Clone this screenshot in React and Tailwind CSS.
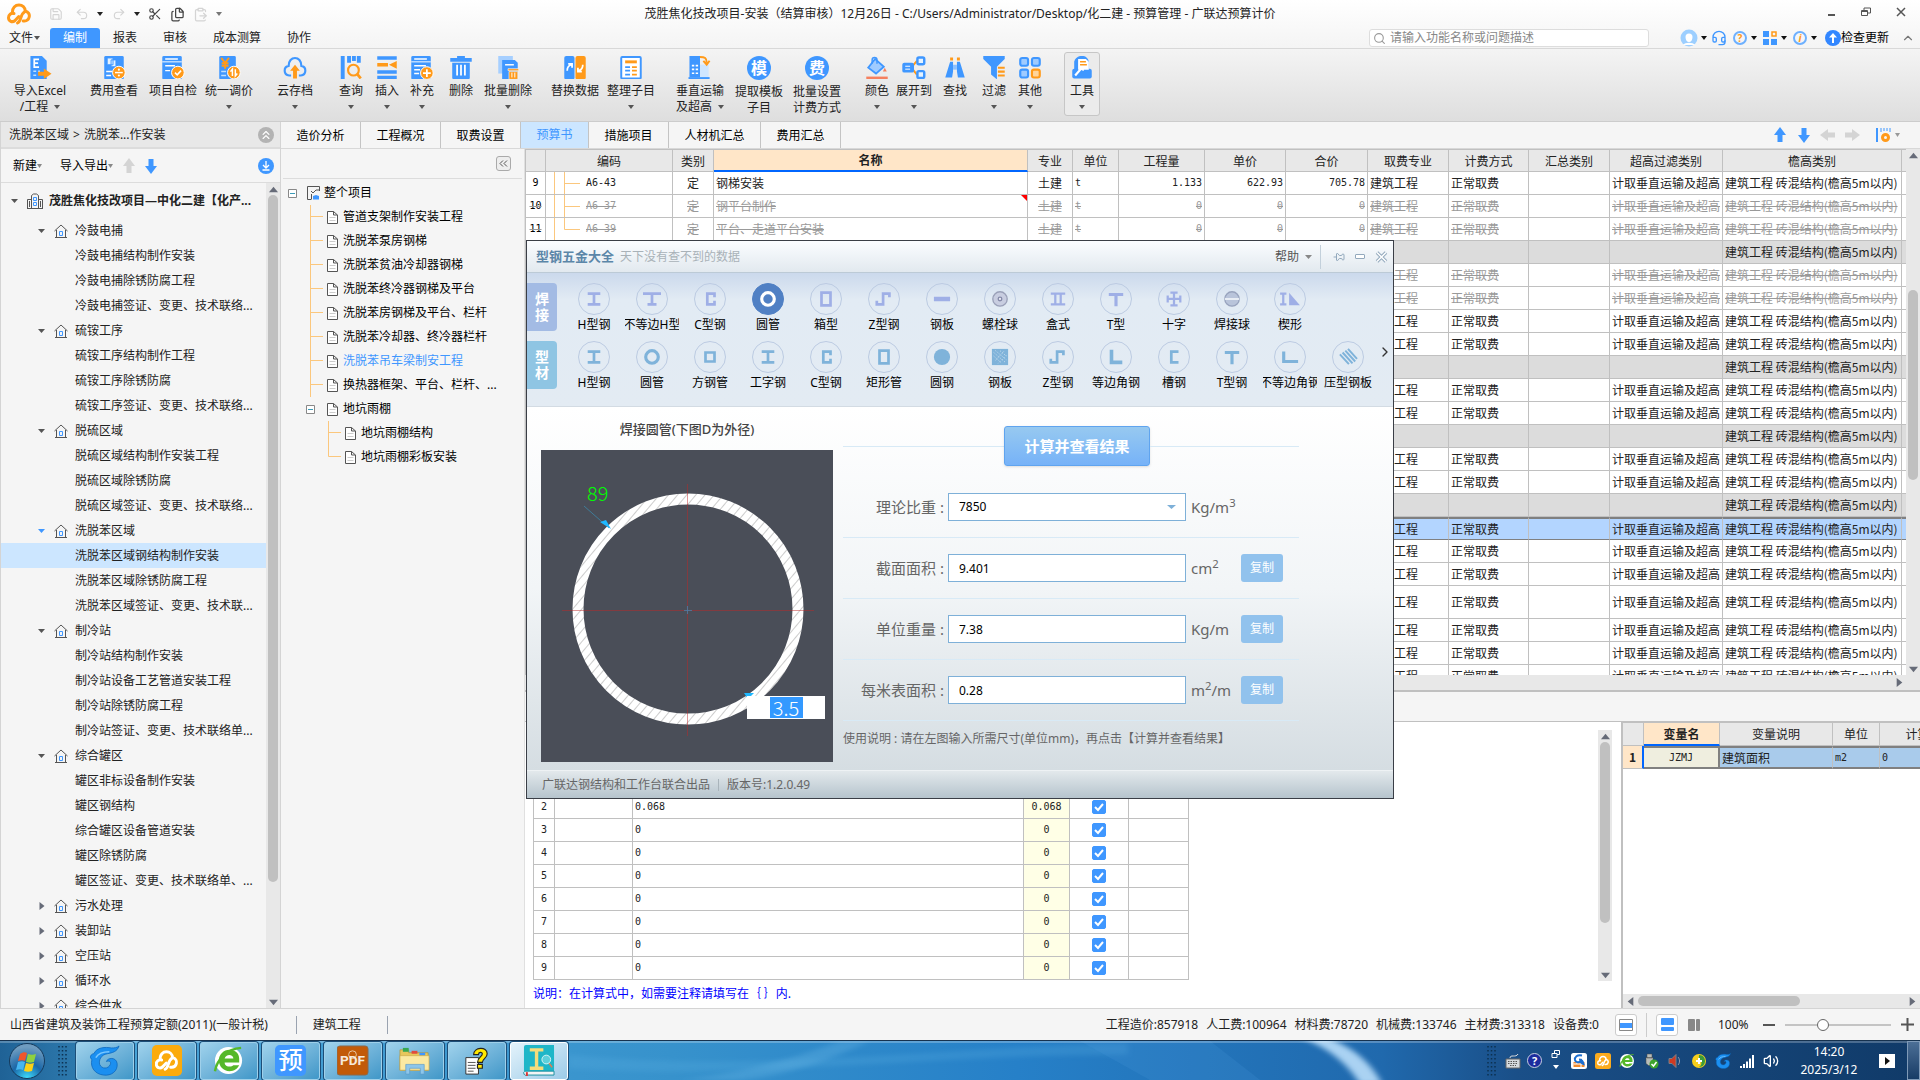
import { useState } from 'react'
import { Search, Scissors, ClipboardPaste, Undo2, Redo2, Save, Files, ChevronUp, ChevronRight, ChevronsUp, Headset, Volume2, Pin } from 'lucide-react'

const BLUE = '#3f97ff'
const ORANGE = '#ff9a1a'

/* ---------- small shared shapes ---------- */

function Caret({ className = 'text-[#555]', size = 7 }) {
  return (
    <svg width={size} height="4" viewBox="0 0 7 4" preserveAspectRatio="none" className={`shrink-0 ${className}`}>
      <path d="M0 0h7L3.5 4z" fill="currentColor" />
    </svg>
  )
}

function Triangle({ dir, size = 9 }) {
  const paths = {
    up: 'M0 6.5h8L4 1.5z',
    down: 'M0 1.5h8L4 6.5z',
    left: 'M6.5 0v8L1.5 4z',
    right: 'M1.5 0v8L6.5 4z',
  }
  return (
    <svg width={size} height={size} viewBox="0 0 8 8" className="shrink-0 text-[#666b78]">
      <path d={paths[dir]} fill="currentColor" />
    </svg>
  )
}

function BlockArrow({ dir, className }) {
  const turn = { up: 0, right: 90, down: 180, left: 270 }[dir]
  return (
    <svg width="16" height="16" viewBox="0 0 16 16" className={`shrink-0 ${className}`}>
      <path d="M8 0l6 8h-3.500v7h-5V8H2z" fill="currentColor" transform={`rotate(${turn} 8 8)`} />
    </svg>
  )
}

function CloudLogo({ size = 24, color = ORANGE }) {
  return (
    <svg width={size} height={size} viewBox="0 0 24 24" fill="none" stroke={color} strokeWidth="3" strokeLinecap="round" strokeLinejoin="round">
      <path d="M5.500 11C5 5.500 8.500 3 12 3c3.500 0 6 2.500 6.300 6 3.200.8 4.500 3.500 3.900 6-.7 2.800-3.200 4.300-6 3.900" />
      <path d="M7 11.500c-3-.8-5.500 1.300-5.500 4.300 0 3.400 3.700 4.900 6.300 2.900l4-4.200" />
      <path d="M10.500 21c4.500-2 2-8.500 7.500-11.500" />
    </svg>
  )
}

/* ---------- ribbon ---------- */

const ribbonIcons = {
  excel: (
    <>
      <path d="M2 0h12l5 5v19H2z" fill={BLUE} />
      <path d="M11 3.500H6v8h5M6 7.500h4" stroke="#fff" strokeWidth="1.800" fill="none" />
      <path d="M5 16h3M5 20h3M10 16h2" stroke="#bfe0ff" strokeWidth="1.500" />
      <path d="M10 16.500h6V13l8 5.500-8 5.500v-3.500h-6z" fill={ORANGE} />
    </>
  ),
  cost: (
    <>
      <rect x="2" width="20" height="24" rx="1.500" fill={BLUE} />
      <path d="M5 2h6v7H5zM9 4h5v7H9z" fill="#e7f3ff" stroke={BLUE} />
      <path d="M4 16h6M4 20h5" stroke="#fff" strokeWidth="1.500" />
      <circle cx="17" cy="17" r="6.500" fill={ORANGE} stroke="#fff" />
      <path d="M13 17h8" stroke="#fff" strokeWidth="1.500" />
      <circle cx="17" cy="14" r="1.100" fill="#fff" /><circle cx="17" cy="20" r="1.100" fill="#fff" />
    </>
  ),
  check: (
    <>
      <rect x="1" width="20" height="24" rx="1.500" fill={BLUE} />
      <path d="M1 6h20" stroke="#fff" /><path d="M4 3h13M4 10h10M4 15h5" stroke="#fff" strokeWidth="1.500" />
      <circle cx="17" cy="17" r="6.500" fill={ORANGE} stroke="#fff" />
      <path d="M14 17l2.300 2.300 4-4.300" stroke="#fff" strokeWidth="1.600" fill="none" />
    </>
  ),
  price: (
    <>
      <rect x="2" width="17" height="24" rx="1.500" fill={BLUE} />
      <path d="M4 2l4 5 4-5M8 7v6M4.500 7.500h7M4.500 10h7" stroke={ORANGE} strokeWidth="2" fill="none" />
      <path d="M4 16h5M4 20h5" stroke="#bfe0ff" strokeWidth="1.500" />
      <circle cx="17" cy="17" r="6.500" fill={ORANGE} stroke="#fff" />
      <path d="M15.500 20.500v-7l-2 2.500M18.500 13.500v7l2-2.500" stroke="#fff" strokeWidth="1.500" fill="none" />
    </>
  ),
  cloud: (
    <>
      <path d="M8 20H6a5 5 0 0 1-.5-9.900C5.500 5 8.500 2 12 2s6.500 3 6.500 8.100A5 5 0 0 1 18 20h-2" stroke={BLUE} strokeWidth="2.200" fill="none" />
      <path d="M12 9l5 6h-3v8h-4v-8H7z" fill={ORANGE} />
    </>
  ),
  query: (
    <>
      <path d="M3.500 0v24M10 0v7M15 0v5M20 0v7" stroke={BLUE} strokeWidth="4" />
      <circle cx="14.500" cy="14.500" r="5.500" stroke={ORANGE} strokeWidth="2.200" fill="none" />
      <path d="M18 18l4 5" stroke={ORANGE} strokeWidth="2.800" />
    </>
  ),
  insert: (
    <>
      <path d="M2 2h20M2 16.500h20M2 22h20" stroke={BLUE} strokeWidth="3.600" />
      <path d="M2 9h11" stroke={ORANGE} strokeWidth="3.600" /><path d="M22 5v8l-8-4z" fill={ORANGE} />
    </>
  ),
  add: (
    <>
      <rect x="1" width="20" height="24" rx="1.500" fill={BLUE} />
      <path d="M1 6h20" stroke="#fff" /><path d="M4 3h13M4 10h12M4 14h6M4 18h5" stroke="#fff" strokeWidth="1.500" />
      <circle cx="17" cy="17.500" r="6.500" fill={ORANGE} stroke="#fff" />
      <path d="M13 17.500h8M17 13.500v8" stroke="#fff" strokeWidth="1.800" />
    </>
  ),
  trash: (
    <>
      <path d="M8 0h8v2h7v4H1V2h7z" fill={BLUE} /><path d="M3 7h18v15a2 2 0 0 1-2 2H5a2 2 0 0 1-2-2z" fill={BLUE} />
      <path d="M8 9v11M12 9v11M16 9v11" stroke="#fff" strokeWidth="1.800" />
    </>
  ),
  batchTrash: (
    <>
      <path d="M2 0h15v18H2z" fill="#a6cfff" /><path d="M6 4h13l3 3v17H6z" fill={BLUE} />
      <path d="M9 9h9" stroke="#fff" strokeWidth="1.500" />
      <path d="M12 13h11v2H12zM13 16h9v8h-9z" fill={ORANGE} stroke="#fff" strokeWidth=".6" />
      <path d="M16 17v5M19 17v5" stroke="#fff" />
    </>
  ),
  replace: (
    <>
      <rect x="1" width="10.500" height="24" rx="2" fill={BLUE} /><rect x="12.500" width="10.500" height="24" rx="2" fill={ORANGE} />
      <path d="M4 15c0-3 1-5 4-6M5 8h4v4M20 9c0 3-1 5-4 6M19 16h-4v-4" stroke="#fff" strokeWidth="1.800" fill="none" />
    </>
  ),
  tidy: (
    <>
      <rect x="2" y="1" width="20" height="22" rx="1" fill="#fff" stroke={BLUE} strokeWidth="2" />
      <path d="M6 6h12" stroke={ORANGE} strokeWidth="3" /><path d="M6 11.500h5M6 15h5M6 19h5" stroke={BLUE} strokeWidth="1.800" />
      <path d="M13 11.500h5M13 15h5M13 19h5" stroke={ORANGE} strokeWidth="1.800" />
    </>
  ),
  height: (
    <>
      <path d="M1 0h11v22H1z" fill={BLUE} /><path d="M12 9h9v13h-9z" fill="#cfe6ff" />
      <path d="M3.500 10h2.500M7.500 10H10M3.500 14h2.500M7.500 14H10M3.500 18h2.500M7.500 18H10" stroke="#fff" strokeWidth="1.800" />
      <path d="M0 23h22" stroke={BLUE} strokeWidth="2" /><path d="M12 1c5 0 7 1 7 6M15.500 5l3.500 4 3-4" stroke={ORANGE} strokeWidth="2" fill="none" />
    </>
  ),
  paint: (
    <>
      <path d="M10 3l9 8-8 7-8-6z" fill="#9fcbff" stroke={BLUE} strokeWidth="1.800" />
      <path d="M7 8V4a2.500 2.500 0 0 1 5 0v4" stroke={BLUE} strokeWidth="1.500" fill="none" />
      <path d="M20 12l2 4h-4z" fill="#f5805f" /><path d="M1 22.500h22" stroke="#f5805f" strokeWidth="2.800" />
    </>
  ),
  expand: (
    <>
      <path d="M10 11l5-6M10 13l5 6" stroke={ORANGE} strokeWidth="2" />
      <rect x="0" y="7" width="12" height="10" rx="2" fill={BLUE} /><path d="M3 10.500h5M3 13.500h5" stroke="#fff" />
      <rect x="15.500" y="1.500" width="7" height="7" rx="1.500" fill="#e6f3ff" stroke={BLUE} strokeWidth="2.500" />
      <rect x="15.500" y="15.500" width="7" height="7" rx="1.500" fill="#e6f3ff" stroke={BLUE} strokeWidth="2.500" />
    </>
  ),
  find: (
    <>
      <path d="M7 6h3v10l-1 6H2zM14 6h3l5 16h-7l-1-6z" fill={BLUE} /><path d="M10 9h4v5h-4z" fill="#8cc1ff" />
      <path d="M7 3h3M14 3h3" stroke={ORANGE} strokeWidth="3" />
    </>
  ),
  filter: (
    <>
      <path d="M1 0h22v3l-8 8v13l-6-5v-8L1 3z" fill={BLUE} />
      <path d="M16 12h7M16 16h7M16 20h7" stroke={ORANGE} strokeWidth="2.200" />
    </>
  ),
  other: (
    <>
      <g fill="#9fcbff" stroke={BLUE} strokeWidth="2.200">
        <rect x="2" y="2" width="8" height="8" rx="2" /><rect x="14" y="2" width="8" height="8" rx="2" /><rect x="2" y="14" width="8" height="8" rx="2" />
      </g>
      <rect x="14" y="14" width="8" height="8" rx="2" fill="#ffd59b" stroke={ORANGE} strokeWidth="2.200" />
    </>
  ),
  tools: (
    <>
      <path d="M4 6c1-4 4-6 8-6s6 2 7 6v9H4z" fill={BLUE} /><rect x="2" y="13" width="20" height="10" rx="2" fill={BLUE} />
      <path d="M8 3h8l3 3v8H8z" fill="#fff" /><path d="M10 6h6M10 9h7" stroke={ORANGE} strokeWidth="1.500" />
      <path d="M5 20l6-7m-2-1a3 3 0 0 1 4 3" stroke="#fff" strokeWidth="2.200" fill="none" />
    </>
  ),
}

const ribbonItems = [
  { icon: 'excel', lines: ['导入Excel', '/工程'], caret: true, box: 'w-[60px] ml-[10px]' },
  { icon: 'cost', lines: ['费用查看'], box: 'w-14 ml-4' },
  { icon: 'check', lines: ['项目自检'], box: 'w-14 ml-[3px]' },
  { icon: 'price', lines: ['统一调价'], caret: true, box: 'w-14' },
  { icon: 'cloud', lines: ['云存档'], caret: true, box: 'w-10 ml-[18px]' },
  { icon: 'query', lines: ['查询'], caret: true, box: 'w-8 ml-5' },
  { icon: 'insert', lines: ['插入'], caret: true, box: 'w-8 ml-1' },
  { icon: 'add', lines: ['补充'], caret: true, box: 'w-8 ml-[3px]' },
  { icon: 'trash', lines: ['删除'], box: 'w-8 ml-[7px]' },
  { icon: 'batchTrash', lines: ['批量删除'], caret: true, box: 'w-14 ml-[3px]' },
  { icon: 'replace', lines: ['替换数据'], box: 'w-14 ml-[11px]' },
  { icon: 'tidy', lines: ['整理子目'], caret: true, box: 'w-14' },
  { icon: 'height', lines: ['垂直运输', '及超高'], caret: true, box: 'w-14 ml-[13px]' },
  { badge: '模', lines: ['提取模板', '子目'], box: 'w-14 ml-[3px]' },
  { badge: '费', lines: ['批量设置', '计费方式'], box: 'w-14 ml-[2px]' },
  { icon: 'paint', lines: ['颜色'], caret: true, box: 'w-8 ml-4' },
  { icon: 'expand', lines: ['展开到'], caret: true, box: 'w-10 ml-px' },
  { icon: 'find', lines: ['查找'], box: 'w-8 ml-[5px]' },
  { icon: 'filter', lines: ['过滤'], caret: true, box: 'w-8 ml-[7px]' },
  { icon: 'other', lines: ['其他'], caret: true, box: 'w-8 ml-1' },
  { icon: 'tools', lines: ['工具'], caret: true, box: 'w-[34px] ml-[19px] rounded-[2px] outline outline-[#c6c6c6] bg-[#ebebeb]' },
]

function RibbonButton({ item }) {
  return (
    <button type="button" className={`flex h-[62px] shrink-0 flex-col items-center pt-[3px] whitespace-nowrap ${item.box}`}>
      {item.badge ? (
        <span className="flex h-6 w-6 items-center justify-center rounded-full bg-[#3f97ff] text-base font-bold leading-6 text-white">{item.badge}</span>
      ) : (
        <svg width="24" height="24" viewBox="0 0 24 24">{ribbonIcons[item.icon]}</svg>
      )}
      <span className="mt-1 leading-4">{item.lines[0]}</span>
      <span className="flex h-4 items-center justify-center gap-[6px] leading-4">
        {item.lines[1]}
        {item.caret && <Caret size={6} />}
      </span>
    </button>
  )
}

function TitleBar() {
  return (
    <div className="grid h-7 grid-cols-[1fr_auto_1fr] items-center">
      <div className="flex items-center gap-2 pl-[7px] text-[#d4d4d4]">
        <CloudLogo size={24} />
        <Save size={14} className="ml-[10px]" />
        <Undo2 size={14} className="ml-1" />
        <Caret size={6} className="text-[#222]" />
        <Redo2 size={14} className="ml-px" />
        <Caret size={6} className="text-[#222]" />
        <Scissors size={14} className="text-[#444]" />
        <Files size={15} className="text-[#444]" />
        <ClipboardPaste size={15} />
        <Caret size={6} className="text-[#777]" />
      </div>
      <h1 className="text-[#222]">茂胜焦化技改项目-安装（结算审核）12月26日 - C:/Users/Administrator/Desktop/化二建 - 预算管理 - 广联达预算计价</h1>
      <div className="flex items-center justify-end gap-6 pr-[13px] pb-1 text-[#555]">
        <button type="button" aria-label="最小化" className="flex h-3 w-3 items-end justify-center pb-[2px]">
          <span className="h-[2px] w-[7px] bg-[#555]" />
        </button>
        <button type="button" aria-label="还原">
          <svg width="10" height="10" viewBox="0 0 10 10" fill="none" stroke="currentColor"><path d="M.5 3.500h6v5h-6zM.5 4.500h6M3 3V1h6.500v5H7" /></svg>
        </button>
        <button type="button" aria-label="关闭">
          <svg width="12" height="10" viewBox="0 0 12 10" stroke="currentColor" strokeWidth="1.500"><path d="M2 1l8 8M10 1L2 9" /></svg>
        </button>
      </div>
    </div>
  )
}

function MenuRow() {
  return (
    <div className="flex h-5 items-center justify-between">
      <nav className="flex items-center">
        <button type="button" className="flex w-[50px] items-center gap-px pl-[9px]">文件<Caret size={6} /></button>
        <button type="button" className="h-5 w-[50px] rounded-t-[3px] bg-[#3f97ff] text-white">编制</button>
        <button type="button" className="w-[50px]">报表</button>
        <button type="button" className="w-[50px]">审核</button>
        <button type="button" className="w-[74px]">成本测算</button>
        <button type="button" className="w-[50px]">协作</button>
      </nav>
      <div className="flex items-center pr-[5px]">
        <label className="mr-[31px] flex h-[18px] w-[280px] items-center gap-1 rounded-[3px] border border-[#ddd] bg-white px-[3px] text-[#999]">
          <Search size={13} />
          <input type="text" aria-label="搜索功能" placeholder="请输入功能名称或问题描述" className="h-4 flex-1 outline-none placeholder:text-[#888]" />
        </label>
        <button type="button" aria-label="用户" className="flex items-center gap-[3px]">
          <svg width="18" height="18" viewBox="0 0 18 18"><circle cx="9" cy="9" r="8.500" fill="#9dcfff" /><path d="M5.500 8a3.500 3.500 0 0 1 7 0c0 3-1.500 5-3.500 5S5.500 11 5.500 8z" fill="#fff" /><path d="M3 16c2-3 10-3 12 0" fill="#fff" /></svg>
          <Caret size={6} className="text-[#111]" />
        </button>
        <button type="button" aria-label="客服" className="ml-1 text-[#3f97ff]"><Headset size={16} /></button>
        <button type="button" aria-label="帮助" className="ml-[6px] flex items-center gap-1">
          <span className="flex h-[14px] w-[14px] items-center justify-center rounded-full border-2 border-[#6db0ff] text-[10px] font-bold leading-none text-[#ff9a1a]">?</span>
          <Caret size={6} className="text-[#111]" />
        </button>
        <button type="button" aria-label="应用" className="ml-[6px] flex items-center gap-1">
          <svg width="14" height="14" viewBox="0 0 14 14"><path d="M0 0h6v6H0zM0 8h6v6H0zM8 8h6v6H8z" fill={BLUE} /><path d="M9 1h4v4H9z" fill="none" stroke={ORANGE} strokeWidth="1.500" /></svg>
          <Caret size={6} className="text-[#111]" />
        </button>
        <button type="button" aria-label="信息" className="ml-[6px] flex items-center gap-1">
          <span className="flex h-[14px] w-[14px] items-center justify-center rounded-full border-2 border-[#6db0ff] text-[10px] font-bold italic leading-none text-[#ff9a1a]">i</span>
          <Caret size={6} className="text-[#111]" />
        </button>
        <button type="button" className="ml-2 flex items-center text-black">
          <svg width="16" height="16" viewBox="0 0 16 16"><circle cx="8" cy="8" r="8" fill="#3387ff" /><path d="M8 3l4 4.500H9V13H7V7.500H4z" fill="#fff" /></svg>
          检查更新
        </button>
        <button type="button" aria-label="收起功能区" className="ml-3 text-[#777]"><ChevronUp size={14} /></button>
      </div>
    </div>
  )
}

/* ---------- project tree (left) ---------- */

const projectTree = [
  { name: '冷鼓电捕', children: ['冷鼓电捕结构制作安装', '冷鼓电捕除锈防腐工程', '冷鼓电捕签证、变更、技术联络...'] },
  { name: '硫铵工序', children: ['硫铵工序结构制作工程', '硫铵工序除锈防腐', '硫铵工序签证、变更、技术联络...'] },
  { name: '脱硫区域', children: ['脱硫区域结构制作安装工程', '脱硫区域除锈防腐', '脱硫区域签证、变更、技术联络...'] },
  { name: '洗脱苯区域', active: true, children: ['洗脱苯区域钢结构制作安装', '洗脱苯区域除锈防腐工程', '洗脱苯区域签证、变更、技术联...'] },
  { name: '制冷站', children: ['制冷站结构制作安装', '制冷站设备工艺管道安装工程', '制冷站除锈防腐工程', '制冷站签证、变更、技术联络单...'] },
  { name: '综合罐区', children: ['罐区非标设备制作安装', '罐区钢结构', '综合罐区设备管道安装', '罐区除锈防腐', '罐区签证、变更、技术联络单、...'] },
  { name: '污水处理' },
  { name: '装卸站' },
  { name: '空压站' },
  { name: '循环水' },
  { name: '综合供水' },
]

function HouseIcon() {
  return (
    <svg width="14" height="14" viewBox="0 0 14 14" fill="none" stroke="#555" className="shrink-0">
      <path d="M.5 7L7 1l6.500 6M2.500 6v7.500h9V6M1 13.500h12" />
      <path d="M5.500 7.500h3v4h-3z" stroke={BLUE} />
    </svg>
  )
}

function ProjectPanel() {
  const [selected, setSelected] = useState('洗脱苯区域钢结构制作安装')

  return (
    <aside className="flex w-[281px] shrink-0 flex-col border-x border-[#d4d4d4] bg-[#f5f5f5]">
      <div className="flex h-[27px] shrink-0 items-center justify-between border-b-2 border-[#dcdcdc] bg-[#e8e8e8] pr-[6px] pl-2">
        <span className="flex gap-1"><span>洗脱苯区域</span><span>&gt;</span><span>洗脱苯...作安装</span></span>
        <button type="button" aria-label="折叠" className="flex h-4 w-4 items-center justify-center rounded-full bg-[#b3b3b3] text-white"><ChevronsUp size={14} /></button>
      </div>
      <div className="flex h-[34px] shrink-0 items-center border-b border-[#dcdcdc] pr-[6px] pl-3 text-black">
        <button type="button" className="flex items-center">新建<Caret size={5} className="text-[#888]" /></button>
        <button type="button" className="ml-[18px] flex items-center">导入导出<Caret size={5} className="text-[#888]" /></button>
        <BlockArrow dir="up" className="ml-2 text-[#d4d4d4]" />
        <BlockArrow dir="down" className="ml-[6px] text-[#3f97ff]" />
        <button type="button" aria-label="下载" className="ml-auto flex h-4 w-4 items-center justify-center rounded-full bg-[#3f97ff]">
          <svg width="10" height="10" viewBox="0 0 10 10" fill="none" stroke="#fff" strokeWidth="1.300"><path d="M5 0v6M2 4l3 3 3-3M1.500 9h7" /></svg>
        </button>
      </div>
      <div className="flex min-h-0 flex-1">
        <div className="min-w-0 flex-1 overflow-hidden">
          <div className="flex h-[35px] items-center pl-[10px] font-bold">
            <Caret />
            <svg width="16" height="16" viewBox="0 0 16 16" fill="none" stroke="#555" className="mr-[6px] ml-[9px] shrink-0">
              <path d="M4.500 15V2.500l2-1.500h3l2 1.500V15M.5 15V6.500h4M15.500 15V6.500h-4M0 15.500h16M2.500 8v6M13.500 8v6" />
              <path d="M6.500 4.500h3v3h-3zM6.500 9.500h3v3h-3z" stroke={BLUE} />
            </svg>
            茂胜焦化技改项目—中化二建【化产...
          </div>
          {projectTree.map((group) => (
            <div key={group.name}>
              <div className="flex h-[25px] items-center pl-[37px]">
                <span className="flex w-4 items-center">
                  {group.children ? <Caret className={group.active ? 'text-[#3f97ff]' : 'text-[#555]'} /> : <Triangle dir="right" size={8} />}
                </span>
                <HouseIcon />
                <span className="ml-[7px]">{group.name}</span>
              </div>
              {group.children?.map((name) => (
                <button
                  key={name}
                  type="button"
                  onClick={() => setSelected(name)}
                  className={`flex h-[25px] w-full items-center pl-[74px] whitespace-nowrap ${selected === name ? 'bg-[#cce6ff]' : ''}`}
                >
                  {name}
                </button>
              ))}
            </div>
          ))}
        </div>
        <VScroll thumb="h-[687px]" />
      </div>
    </aside>
  )
}

function VScroll({ thumb, offset = 'mt-0' }) {
  return (
    <div className="flex w-[14px] shrink-0 flex-col items-center overflow-hidden bg-[#e8e8e8]">
      <span className="flex h-3 items-center"><Triangle dir="up" /></span>
      <span className={`w-[10px] rounded-full bg-[#c0c0c0] ${thumb} ${offset}`} />
      <span className="mt-auto flex h-3 items-center"><Triangle dir="down" /></span>
    </div>
  )
}

/* ---------- section tree (middle) ---------- */

function DocIcon() {
  return (
    <svg width="11" height="13" viewBox="0 0 11 13" fill="#fff" stroke="#555" className="shrink-0">
      <path d="M.5.5h6l4 3.500v8.500H.5zM6.500.5V4h4" />
      <path d="M2.500 6.500h6M2.500 9.500h6" stroke="#ccc" />
    </svg>
  )
}

function MinusBox() {
  return (
    <svg width="9" height="9" viewBox="0 0 9 9" fill="#fff" stroke="#888" className="shrink-0">
      <path d="M.5.5h8v8h-8z" /><path d="M2 4.500h5" stroke="#3a9bb8" />
    </svg>
  )
}

function Branch({ last }) {
  return (
    <svg width="13" height="24" viewBox="0 0 13 24" fill="none" stroke="#fbc77d" className="shrink-0">
      <path d={last ? 'M.5 0v11.500H13' : 'M.5 0v24M.5 11.500H13'} />
    </svg>
  )
}

const sections = [
  '管道支架制作安装工程', '洗脱苯泵房钢梯', '洗脱苯贫油冷却器钢梯', '洗脱苯终冷器钢梯及平台', '洗脱苯房钢梯及平台、栏杆',
  '洗脱苯冷却器、终冷器栏杆', '洗脱苯吊车梁制安工程', '换热器框架、平台、栏杆、...',
]

function SectionPanel() {
  return (
    <div className="flex w-[243px] shrink-0 flex-col bg-[#f5f5f5] text-black">
      <div className="mx-[2px] flex h-[30px] items-center justify-end border-b border-[#dcdcdc] pr-[11px]">
        <button type="button" className="flex h-[15px] w-[15px] items-center justify-center rounded-[3px] border border-[#aaa] bg-[#eee]" aria-label="收起">
          <svg width="9" height="7" viewBox="0 0 9 7" fill="none" stroke="#555"><path d="M4 .5l-3 3 3 3M8 .5l-3 3 3 3" /></svg>
        </button>
      </div>
      <div className="pt-[2px] pl-[7px]">
        <div className="flex h-6 items-center">
          <MinusBox />
          <svg width="13" height="14" viewBox="0 0 13 14" fill="none" stroke="#555" className="mr-1 ml-[10px]">
            <path d="M12.500 5V.5H.5v13h4M4 5l2 2 3-3 3.500 0M4.500 13V8" /><path d="M6 10l3-1 3 1v3.500H6z" fill={BLUE} stroke="none" />
          </svg>
          整个项目
        </div>
        {sections.map((name) => (
          <div key={name} className="flex h-6 items-center pl-[22px]">
            <Branch />
            <span className="mr-[5px] ml-1"><DocIcon /></span>
            <span className={name === '洗脱苯吊车梁制安工程' ? 'text-[#3f97ff]' : ''}>{name}</span>
          </div>
        ))}
        <div className="flex h-6 items-center pl-[18px]">
          <MinusBox />
          <span className="mr-[5px] ml-3"><DocIcon /></span>
          地坑雨棚
        </div>
        {['地坑雨棚结构', '地坑雨棚彩板安装'].map((name, i) => (
          <div key={name} className="flex h-6 items-center pl-10">
            <Branch last={i === 1} />
            <span className="mr-[5px] ml-1"><DocIcon /></span>
            {name}
          </div>
        ))}
      </div>
    </div>
  )
}

/* ---------- main quota table ---------- */

const quotaHead = ['', '编码', '类别', '名称', '专业', '单位', '工程量', '单价', '合价', '取费专业', '计费方式', '汇总类别', '超高过滤类别', '檐高类别']

const normal = { kind: 'normal' }
const struck = { kind: 'struck' }
const group = { kind: 'group' }
const quotaRows = [
  { kind: 'normal', no: 9, code: 'A6-43', type: '定', name: '钢梯安装', major: '土建', unit: 't', qty: '1.133', price: '622.93', total: '705.78' },
  { kind: 'struck', no: 10, code: 'A6-37', type: '定', name: '钢平台制作', major: '土建', unit: 't', qty: '0', price: '0', total: '0', flag: true },
  { kind: 'struck', no: 11, code: 'A6-39', type: '定', name: '平台、走道平台安装', major: '土建', unit: 't', qty: '0', price: '0', total: '0', last: true },
  group, struck, struck, normal, normal, group, normal, normal, group, normal, normal, group,
  { kind: 'selected' },
  normal, normal, { kind: 'normal', tall: true }, normal, normal, normal,
]

const rowStyles = {
  normal: 'bg-white',
  struck: 'bg-white text-[#999] line-through',
  group: 'bg-[#dcdcdc]',
  selected: 'bg-[#b3d5ff]',
}

// figures and codes in the grids use a fixed-width face
const mono = "font-['DejaVu_Sans_Mono',monospace] text-[10px]"

function QuotaTable() {
  const cell = 'border-r border-b border-[#c0c0c0] p-0 px-[2px] overflow-hidden whitespace-nowrap'
  return (
    <div className="flex min-h-0 flex-1">
      <div className="min-w-0 flex-1 overflow-hidden bg-white">
        <table className="w-full table-fixed border-separate border-spacing-0 border-l border-[#c0c0c0] font-['Noto_Sans_CJK_SC',sans-serif] leading-5">
          <colgroup>
            <col className="w-[20px]" /><col className="w-[127px]" /><col className="w-[41px]" /><col />
            <col className="w-[45px]" /><col className="w-[46px]" /><col className="w-[86px]" /><col className="w-[81px]" />
            <col className="w-[82px]" /><col className="w-[81px]" /><col className="w-[80px]" /><col className="w-[81px]" />
            <col className="w-[113px]" /><col className="w-[179px]" /><col className="w-1" />
          </colgroup>
          <thead>
            <tr className="h-[23px]">
              {quotaHead.map((h) => (
                <th
                  key={h}
                  className={`border-r border-[#c0c0c0] border-t p-0 ${h === '名称' ? 'border-b-2 border-b-[#0066ff] bg-[#ffe6c8] font-bold' : 'border-b bg-[#e8e8e8] font-normal'}`}
                >
                  {h}
                </th>
              ))}
              <th className="border-t border-b border-[#c0c0c0] bg-[#e8e8e8] p-0" />
            </tr>
          </thead>
          <tbody>
            {quotaRows.map((r, i) => {
              const isGroup = r.kind === 'group'
              const sel = r.kind === 'selected' ? 'border-y-2 border-y-[#808080] leading-[18px]' : ''
              return (
                <tr key={i} className={`${r.tall ? 'h-[33px]' : 'h-[23px]'} ${rowStyles[r.kind]}`}>
                  <td className={`${cell} ${sel} ${mono} text-center text-black`}>{r.no}</td>
                  <td className={`${cell} ${sel}`}>
                    {r.code && (
                      <span className="-my-px flex h-[22px] items-center">
                        <svg width="32" height="23" viewBox="0 0 32 23" fill="none" stroke="#fbc77d" className="mr-[6px] shrink-0">
                          <path d={r.last ? 'M6.500 0v23M16.500 0v11.500H32' : 'M6.500 0v23M16.500 0v23M16.500 11.500H32'} />
                        </svg>
                        <span className={`${mono} ${r.kind === 'struck' ? 'line-through' : ''}`}>{r.code}</span>
                      </span>
                    )}
                  </td>
                  <td className={`${cell} ${sel} text-center`}>{r.type}</td>
                  <td className={`${cell} ${sel} relative`}>
                    {r.name}
                    {r.flag && <svg width="6" height="6" viewBox="0 0 6 6" className="absolute top-0 right-0"><path d="M0 0h6v6z" fill="red" /></svg>}
                  </td>
                  <td className={`${cell} ${sel} text-center`}>{r.major}</td>
                  <td className={`${cell} ${sel} ${mono}`}>{r.unit}</td>
                  <td className={`${cell} ${sel} ${mono} text-right`}>{r.qty}</td>
                  <td className={`${cell} ${sel} ${mono} text-right`}>{r.price}</td>
                  <td className={`${cell} ${sel} ${mono} text-right`}>{r.total}</td>
                  <td className={`${cell} ${sel}`}>{isGroup ? '' : '建筑工程'}</td>
                  <td className={`${cell} ${sel}`}>{isGroup ? '' : '正常取费'}</td>
                  <td className={`${cell} ${sel}`} />
                  <td className={`${cell} ${sel}`}>{isGroup ? '' : '计取垂直运输及超高'}</td>
                  <td className={`${cell} ${sel}`}>建筑工程 砖混结构(檐高5m以内)</td>
                  <td className={`border-b border-[#c0c0c0] p-0 ${sel}`} />
                </tr>
              )
            })}
          </tbody>
        </table>
      </div>
      <VScroll thumb="h-[190px]" offset="mt-[129px]" />
    </div>
  )
}

/* ---------- lower panels ---------- */

const quantityRows = [2, 3, 4, 5, 6, 7, 8, 9]

function QuantityPanel() {
  const cell = 'border-r border-b border-[#c0c0c0] p-0 px-[2px]'
  return (
    <div className="flex min-w-0 flex-1 flex-col pt-2 pl-2">
      <div className="flex min-h-0 flex-1">
        <div className="min-w-0 flex-1 overflow-hidden pt-[66px]">
          <table className="w-[656px] table-fixed border-separate border-spacing-0 border-l border-[#c0c0c0] font-['Noto_Sans_CJK_SC',sans-serif] leading-5">
            <colgroup>
              <col className="w-[21px]" /><col className="w-[78px]" /><col /><col className="w-[46px]" /><col className="w-[59px]" /><col className="w-[60px]" />
            </colgroup>
            <tbody>
              {quantityRows.map((n) => {
                const value = n === 2 ? '0.068' : '0'
                return (
                  <tr key={n} className="h-[23px]">
                    <td className={`${cell} ${mono} text-center`}>{n}</td>
                    <td className={cell} />
                    <td className={`${cell} ${mono}`}>{value}</td>
                    <td className={`${cell} ${mono} bg-[#ffffe6] text-center`}>{value}</td>
                    <td className={cell}>
                      <label className="relative mx-auto block h-[14px] w-[14px]">
                        <input type="checkbox" defaultChecked aria-label={`第${n}行累加`} className="block h-[14px] w-[14px] appearance-none rounded-[2px] border border-[#3f97ff] checked:bg-[#3f97ff]" />
                        <svg width="14" height="14" viewBox="0 0 14 14" fill="none" stroke="#fff" strokeWidth="2" className="pointer-events-none absolute inset-0"><path d="M3 7l3 3 5-6" /></svg>
                      </label>
                    </td>
                    <td className={cell} />
                  </tr>
                )
              })}
            </tbody>
          </table>
        </div>
        <div className="mr-[9px] flex"><VScroll thumb="h-[181px]" /></div>
      </div>
      <p className="h-[27px] pt-1 font-['Noto_Sans_CJK_SC',sans-serif] leading-4 text-[#0000ff]">说明：在计算式中，如需要注释请填写在｛ ｝内.</p>
    </div>
  )
}

function VariablePanel() {
  const head = 'border-t border-r border-[#c0c0c0] p-0'
  const cell = 'border-y-2 border-y-[#808080] border-r border-[#c0c0c0] bg-[#a9cbeb] p-0 px-[2px]'
  return (
    <div className="flex w-[299px] shrink-0 flex-col overflow-hidden border-l-2 border-[#c0c0c0]">
      <div className="flex-1 overflow-hidden">
        <table className="w-[345px] table-fixed border-separate border-spacing-0 font-['Noto_Sans_CJK_SC',sans-serif] leading-[18px]">
          <colgroup>
            <col className="w-[21px]" /><col className="w-[76px]" /><col className="w-[113px]" /><col className="w-[47px]" /><col />
          </colgroup>
          <thead>
            <tr className="h-6">
              <th className={`${head} border-b bg-[#e8e8e8]`} />
              <th className={`${head} border-b-2 border-b-[#0066ff] bg-[#ffe6c8] font-bold`}>变量名</th>
              <th className={`${head} border-b bg-[#e8e8e8] font-normal`}>变量说明</th>
              <th className={`${head} border-b bg-[#e8e8e8] font-normal`}>单位</th>
              <th className={`${head} border-b bg-[#e8e8e8] font-normal`}>计算式</th>
            </tr>
          </thead>
          <tbody>
            <tr className="h-[23px]">
              <td className="border-r-2 border-b border-r-[#0066ff] border-b-[#c0c0c0] bg-[#ffe6c8] p-0 text-center font-bold">1</td>
              <td className={`border-2 border-l-0 border-[#808080] bg-[#efeedf] p-0 text-center ${mono}`}>JZMJ</td>
              <td className={cell}>建筑面积</td>
              <td className={`${cell} ${mono}`}>m2</td>
              <td className={`${cell} ${mono}`}>0</td>
            </tr>
          </tbody>
        </table>
      </div>
      <div className="flex h-[14px] items-center bg-[#e8e8e8] px-[3px]">
        <Triangle dir="left" />
        <span className="ml-[3px] h-[10px] w-[162px] rounded-full bg-[#c0c0c0]" />
        <span className="ml-auto"><Triangle dir="right" /></span>
      </div>
    </div>
  )
}

/* ---------- steel section dialog ---------- */

const shapes = {
  h: <path d="M2 3h14M2 15h14M9 3v12" strokeWidth="3" />,
  hWide: <path d="M-1 3h20M4 15h10M9 3v12" strokeWidth="3" />,
  c: <path d="M14 7V3H6v12h8v-4" strokeWidth="3" />,
  ring: <circle cx="9" cy="9" r="7" strokeWidth="3.500" />,
  box: <path d="M4 2h10v14H4z" strokeWidth="3" />,
  square: <path d="M4 4h10v10H4z" strokeWidth="3" />,
  z: <path d="M1 11v4h7V3h7v4" strokeWidth="3" />,
  plate: <path d="M0 9h18" strokeWidth="5" />,
  bolt: <><circle cx="9" cy="9" r="8" strokeWidth="1.500" fill="#c8cde0" stroke="#9aa0b8" /><circle cx="9" cy="9" r="2" strokeWidth="1.500" stroke="#858aa8" fill="#e8ebf5" /></>,
  caseBox: <path d="M1 3h16M1 15h16M6 3v12M12 3v12" strokeWidth="2.500" />,
  t: <path d="M1 4h16M9 4v13" strokeWidth="3.500" />,
  cross: <path d="M5 2h8M5 16h8M2 5v8M16 5v8M9 2v14M2 9h14" strokeWidth="2.500" />,
  ball: <><circle cx="9" cy="9" r="8" fill="#b9c4da" stroke="#98a3bd" strokeWidth="1.500" /><path d="M1 9h16" stroke="#eef2f8" strokeWidth="2" /></>,
  wedge: <><path d="M-2 3h7M-2 15h7M1.500 3v12" strokeWidth="2.500" /><path d="M8 2l12 14H8z" fill="currentColor" stroke="none" /></>,
  disc: <circle cx="9" cy="9" r="9" fill="currentColor" stroke="none" />,
  mesh: <><path d="M0 0h18v18H0z" fill="currentColor" stroke="none" /><path d="M2 4l13 11M4 2l12 10M2 8l9 8M9 2l7 6M13 3L3 14M16 7l-9 9" stroke="#dceaf4" strokeWidth="1" strokeDasharray="1 2" /></>,
  l: <path d="M4 1v14h12" strokeWidth="4" />,
  lWide: <path d="M2 3v11h16" strokeWidth="3.500" />,
  slot: <path d="M14 3H6v12h8" strokeWidth="3" />,
  ribbed: <path d="M9 0l10 11M6 2l11 12M3 4l11 12M0 6l10 11" strokeWidth="2.200" />,
}

const welded = [
  ['h', 'H型钢'], ['hWide', '不等边H型'], ['c', 'C型钢'], ['ring', '圆管'], ['box', '箱型'], ['z', 'Z型钢'], ['plate', '钢板'],
  ['bolt', '螺栓球'], ['caseBox', '盒式'], ['t', 'T型'], ['cross', '十字'], ['ball', '焊接球'], ['wedge', '楔形'],
]
const profiles = [
  ['h', 'H型钢'], ['ring', '圆管'], ['square', '方钢管'], ['h', '工字钢'], ['c', 'C型钢'], ['box', '矩形管'], ['disc', '圆钢'],
  ['mesh', '钢板'], ['z', 'Z型钢'], ['l', '等边角钢'], ['slot', '槽钢'], ['t', 'T型钢'], ['lWide', '不等边角钢'], ['ribbed', '压型钢板'],
]

function ShapeRow({ title, items, tabClass, iconClass, active }) {
  return (
    <div className="flex h-[58px]">
      <span className={`mr-2 flex h-12 w-[30px] shrink-0 flex-col items-center justify-center rounded-r-[4px] text-sm leading-4 font-bold text-white ${tabClass}`}>
        <span>{title[0]}</span>
        <span>{title[1]}</span>
      </span>
      {items.map(([shape, label]) => {
        const on = label === active
        return (
          <button key={label} type="button" className="flex w-[58px] shrink-0 flex-col items-center overflow-hidden px-[2px] whitespace-nowrap text-black">
            <span className={`flex h-8 w-8 shrink-0 items-center justify-center rounded-full border ${on ? 'border-[#5080c4] bg-[#5080c4] text-white' : `border-[#bccbe2] ${iconClass}`}`}>
              <svg width="18" height="18" viewBox="-1 -1 20 20" fill="none" stroke="currentColor" className="overflow-visible">{shapes[shape]}</svg>
            </span>
            <span className="flex h-5 w-full items-center justify-center overflow-hidden">{label}</span>
          </button>
        )
      })}
    </div>
  )
}

function PipeDrawing() {
  return (
    <div className="relative h-[312px] w-[292px] bg-[#4a4e58]">
      <svg width="292" height="312" viewBox="0 0 292 312">
        <defs>
          <pattern id="hatch" width="7" height="7" patternUnits="userSpaceOnUse" patternTransform="rotate(40)">
            <rect width="7" height="7" fill="#fff" /><path d="M0 0v7" stroke="#999" strokeWidth="1" />
          </pattern>
        </defs>
        <circle cx="147" cy="159" r="110" fill="none" stroke="url(#hatch)" strokeWidth="11" />
        <path d="M21 160.500h252M146.500 34v252" stroke="#c02626" strokeWidth=".6" opacity=".8" />
        <path d="M143 160.500h8M146.500 156v8" stroke="#4a7fa8" strokeWidth=".8" />
        <path d="M43 56l25 22" stroke="#3d88a8" strokeWidth=".8" />
        <path d="M59 72l6-2 5 9z" fill="#1eb8ff" />
        <path d="M203 243h10l-6 6z" fill="#1eb8ff" />
        <text x="46" y="51" fill="#00ff00" fontSize="20" fontFamily="'Noto Sans CJK SC', sans-serif" fontWeight="300">89</text>
      </svg>
      <div className="absolute top-[246px] left-[206px] flex h-[23px] w-[78px] items-center justify-center bg-white">
        <input aria-label="壁厚" defaultValue="3.5" className="h-[21px] w-[33px] bg-[#3399ff] text-center font-['Noto_Sans_CJK_SC',sans-serif] text-xl leading-5 font-light text-white outline-none" />
      </div>
    </div>
  )
}

const results = [
  { id: 'area', label: '截面面积', value: '9.401', unit: <>cm<sup>2</sup></> },
  { id: 'weight', label: '单位重量', value: '7.38', unit: 'Kg/m' },
  { id: 'surface', label: '每米表面积', value: '0.28', unit: <>m<sup>2</sup>/m</> },
]

function SteelDialog() {
  const row = 'flex h-[61px] items-center border-b border-[#d8eaf6] text-[15px] text-[#666]'
  const field = 'h-7 w-[238px] border border-[#7eb0d8] bg-white px-[10px] text-xs text-black outline-none'
  return (
    <div role="dialog" aria-label="型钢五金大全" className="absolute top-[91px] left-px flex h-[559px] w-[868px] flex-col border border-[#3a3e46] bg-white">
      <div className="flex h-8 shrink-0 items-center border-b border-[#bccad6] bg-linear-to-b from-[#fbfdff] to-[#e2e9ef] pr-[5px] pl-[9px]">
        <span className="text-[13px] font-bold text-[#5b86a8]">型钢五金大全</span>
        <span className="ml-[6px] text-[#a9b2b8]">天下没有查不到的数据</span>
        <button type="button" className="ml-auto flex items-center gap-[6px] text-[#555]">帮助<Caret className="text-[#888]" /></button>
        <span className="mx-2 h-6 w-px bg-[#c3d0db]" />
        <div className="flex items-center gap-[10px] pl-1 text-[#93a9bd]">
          <button type="button" aria-label="置顶"><Pin size={12} className="rotate-90" /></button>
          <button type="button" aria-label="最小化" className="h-[5px] w-[10px] rounded-[1px] border border-[#93a9bd] bg-white" />
          <button type="button" aria-label="关闭">
            <svg width="13" height="12" viewBox="0 0 13 12" fill="none"><path d="M2 1.500l9 9M11 1.500l-9 9" stroke="currentColor" strokeWidth="3.500" /><path d="M2 1.500l9 9M11 1.500l-9 9" stroke="#fff" strokeWidth="1.500" /></svg>
          </button>
        </div>
      </div>

      <div className="flex h-[134px] shrink-0 border-b border-[#d3dbe3] bg-linear-to-b from-[#cbd9ec] via-[#e2ebf4] via-20% to-[#e3ebf3] pt-[10px]">
        <div className="w-[850px]">
          <ShapeRow title="焊接" items={welded} active="圆管" tabClass="bg-[#a3bbe4]" iconClass="text-[#9fafe6]" />
          <ShapeRow title="型材" items={profiles} tabClass="bg-[#8fc5e3]" iconClass="text-[#7fb3da]" />
        </div>
        <button type="button" aria-label="更多" className="mt-[57px] h-6 text-[#333]"><ChevronRight size={16} /></button>
      </div>

      <div className="flex min-h-0 flex-1 bg-linear-to-b from-white via-[#f2f5f7] to-[#d5dde2] pl-[14px]">
        <div className="w-[292px]">
          <h2 className="h-[43px] pt-3 text-center text-[13px] leading-5 font-medium text-[#444]">焊接圆管(下图D为外径)</h2>
          <PipeDrawing />
        </div>
        <div className="ml-[10px] w-[456px]">
          <div className="flex h-[70px] items-center pt-2">
            <span className="h-px flex-1 bg-[#d8eaf6]" />
            <button type="button" className="h-10 w-[146px] rounded-[3px] border border-[#5fa4ef] bg-linear-to-b from-[#97c9f0] to-[#76b2f8] text-[15px] font-bold text-white shadow-sm">计算并查看结果</button>
            <span className="h-px w-[149px] bg-[#d8eaf6]" />
          </div>
          <div className={row}>
            <label htmlFor="density" className="w-[105px] pr-1 text-right">理论比重 :</label>
            <span className="relative">
              <select id="density" className={`${field} appearance-none`}><option>7850</option></select>
              <Caret size={9} className="pointer-events-none absolute top-3 right-[10px] text-[#7eb0d8]" />
            </span>
            <span className="ml-[5px]">Kg/m<sup>3</sup></span>
          </div>
          {results.map((r) => (
            <div key={r.id} className={row}>
              <label htmlFor={r.id} className="w-[105px] pr-1 text-right">{r.label} :</label>
              <input id={r.id} defaultValue={r.value} className={field} />
              <span className="ml-[5px] w-[50px]">{r.unit}</span>
              <button type="button" className="h-7 w-[42px] rounded-[3px] bg-[#91c2ed] text-xs text-white">复制</button>
            </div>
          ))}
          <p className="mt-[10px] whitespace-nowrap text-[#666]">使用说明 : 请在左图输入所需尺寸(单位mm)，再点击【计算并查看结果】</p>
        </div>
      </div>

      <div className="flex h-7 shrink-0 items-center border-t border-[#eef2f4] bg-linear-to-b from-[#e3e9ec] to-[#b6c4cd] pl-[15px] text-[#666]">
        <span>广联达钢结构和工作台联合出品</span>
        <span className="mx-2 h-3 w-px bg-[#a9b4bb]" />
        <span>版本号:1.2.0.49</span>
      </div>
    </div>
  )
}

/* ---------- status bar and taskbar ---------- */

function StatusBar() {
  return (
    <footer className="flex h-8 shrink-0 items-center border-t border-[#d4d4d4] bg-[#f5f5f5] pl-[10px]">
      <span>山西省建筑及装饰工程预算定额(2011)(一般计税)</span>
      <span className="mr-4 ml-7 h-[18px] w-px bg-[#9aa3b0]" />
      <span>建筑工程</span>
      <span className="ml-[26px] h-[18px] w-px bg-[#9aa3b0]" />
      <div className="ml-auto flex items-center gap-2">
        <span>工程造价:857918</span>
        <span>人工费:100964</span>
        <span>材料费:78720</span>
        <span>机械费:133746</span>
        <span>主材费:313318</span>
        <span>设备费:0</span>
      </div>
      <div className="flex items-center pr-[6px]">
        <button type="button" aria-label="表格视图" className="ml-4 flex h-[22px] w-[22px] items-center justify-center rounded-[3px] border border-[#ccc] bg-white">
          <svg width="14" height="14" viewBox="0 0 14 14" fill="none"><path d="M.5 1.500h13v11H.5z" stroke="#888" /><path d="M1 5h12v5H1z" fill={BLUE} /></svg>
        </button>
        <span className="mx-[9px] h-6 w-px bg-[#ccc]" />
        <button type="button" aria-label="上下布局" className="flex h-[22px] w-[22px] items-center justify-center rounded-[3px] border border-[#ccc] bg-white">
          <svg width="13" height="13" viewBox="0 0 13 13" fill={BLUE}><rect width="13" height="7" rx="1" /><rect y="9" width="13" height="4" rx="1" /></svg>
        </button>
        <button type="button" aria-label="左右布局" className="ml-[10px]">
          <svg width="12" height="12" viewBox="0 0 12 12" fill="#888"><rect width="7" height="12" rx="1" /><rect x="8" width="4" height="12" rx="1" /></svg>
        </button>
        <span className="ml-[18px] w-[33px]">100%</span>
        <button type="button" aria-label="缩小" className="ml-3 h-[2px] w-3 bg-[#555]" />
        <div className="relative ml-[10px] h-4 w-[106px]">
          <input type="range" aria-label="缩放" defaultValue="34" className="absolute inset-0 w-full opacity-0" />
          <span className="pointer-events-none flex h-4 items-center">
            <span className="h-[2px] w-8 bg-[#c4c4c4]" />
            <span className="h-3 w-3 rounded-full border border-[#666] bg-white" />
            <span className="h-[2px] flex-1 bg-[#c4c4c4]" />
          </span>
        </div>
        <button type="button" aria-label="放大" className="ml-[10px]">
          <svg width="13" height="13" viewBox="0 0 13 13" stroke="#555" strokeWidth="2"><path d="M6.500 0v13M0 6.500h13" /></svg>
        </button>
      </div>
    </footer>
  )
}

const swirl = (
  <>
    <path d="M31 1c-2 6-7 7-12 8-7 1-9 7-8 11 2 5 9 5 11 0 1-3-1-4-4-3 1-4 10-5 11 2 1 8-6 13-14 12C6 30 1 23 3 15 0 13 2 9 5 9c3-7 12-7 18-6 3 0 6 0 8-2z" fill="#1b8ff0" stroke="#0b66bd" strokeWidth=".8" />
    <path d="M7 13c3-5 9-6 14-6" stroke="#7cc8ff" strokeWidth="1.500" fill="none" />
  </>
)
const browserE = (
  <>
    <circle cx="16" cy="16" r="14" fill="#fff" />
    <path d="M27 14c0-5-4-9-10-9S6 10 6 16s5 11 11 11c5 0 8-2 10-6h-6c-2 2-9 2-9-3h15z" fill="#55b82a" />
    <path d="M12 14c1-5 9-5 9 0z" fill="#fff" /><path d="M2 27C4 15 14 4 29 3" stroke="#55b82a" strokeWidth="2.500" fill="none" />
  </>
)

const taskApps = [
  { name: '广联达', icon: swirl },
  {
    name: '云计价',
    icon: <><rect x="1" y="0" width="31" height="32" rx="5" fill="#fbab0d" /><g transform="translate(4 4)"><CloudLogo color="#fff" /></g></>,
  },
  { name: '浏览器', icon: browserE },
  {
    name: '预算',
    icon: <><rect x="0" y="0" width="32" height="32" rx="5" fill="#3f97ff" /><text x="16" y="25" fontSize="25" textAnchor="middle" fill="#fff" fontFamily="'Noto Sans CJK SC', sans-serif" fontWeight="500">预</text></>,
  },
  {
    name: 'PDF',
    icon: <><rect x="0" y="1" width="32" height="30" rx="3" fill="#c25a08" stroke="#8a6a50" /><circle cx="16" cy="10" r="4" fill="none" stroke="#e8c9a8" /><text x="16" y="21" fontSize="14" textAnchor="middle" fill="#f6e9dc" fontFamily="Roboto, sans-serif" fontWeight="700">PDF</text></>,
  },
  {
    name: '资源管理器',
    icon: <><path d="M1 5h9v3h20v18H1z" fill="#e7c75c" stroke="#b7922f" strokeWidth=".7" /><path d="M4 3h6v4H4z" fill="#35a853" /><path d="M13 6h6v3h-6z" fill="#e34b3c" /><path d="M21 8h6v3h-6z" fill="#3f97ff" /><path d="M1 11h30v15H1z" fill="#fbe9a2" stroke="#cda94a" strokeWidth=".7" /><path d="M7 30V20h19v10h-4v-6H11v6z" fill="#8dc6ea" stroke="#5b9ccb" strokeWidth=".7" /></>,
  },
  {
    name: '帮助文件',
    icon: <><path d="M5 13h13v17H5z" fill="#fff" stroke="#333" /><path d="M7 18h8M7 21h8M7 24h8M7 27h6" stroke="#555" /><path d="M13 10c0-8 14-9 14-1 0 5-5 5-5 9h-5c0-5 5-6 5-9 0-2-4-2-4 1zM17 20h5v4h-5z" fill="#ffe800" stroke="#222" strokeWidth="1.200" /></>,
  },
  {
    name: '型钢五金',
    active: true,
    icon: <><path d="M1 2a2 2 0 0 1 2-2h29v27H1z" fill="#1fb6c8" /><path d="M2 27h30v4H4a2 2 0 0 1-2-4z" fill="#f2f4f5" stroke="#18909f" /><path d="M7 5h14M7 24h14M14 5v19" stroke="#f5dc7c" strokeWidth="3.500" /><circle cx="24" cy="15" r="4.500" fill="#5fd0db" stroke="#d8f4f6" /><path d="M27 19l3 4" stroke="#e57b52" strokeWidth="1.500" /><path d="M4 28v4" stroke="#d33" strokeWidth="2" /></>,
  },
]

const trayIcons = [
  <><rect width="32" height="32" rx="5" fill="#fff" /><path d="M5 18h22v10H5z" fill="#f58b2c" /><path d="M5 22h22M12 18v4M20 22v6" stroke="#fff" strokeWidth="2" /><path d="M22 5C12 3 7 8 8 14c1 5 8 6 12 2 0 3 2 5 5 6-1-5-4-9-9-9" fill="none" stroke="#1d6fd0" strokeWidth="4" /></>,
  <><rect width="32" height="32" rx="5" fill="#fbab1d" /><g transform="translate(4 4)"><CloudLogo color="#fff" /></g></>,
  browserE,
  <><path d="M8 2h10v8H8zM6 9h14v12l-5 4h-4l-5-4z" fill="#b9bdb9" stroke="#444" /><circle cx="22" cy="22" r="9" fill="#3ea52d" /><path d="M17 22l4 4 6-8" stroke="#fff" strokeWidth="3" fill="none" /></>,
  <><path d="M4 11h6l8-8v26l-8-8H4z" fill="#d03a22" stroke="#7a8088" strokeWidth="2" /><path d="M22 8c4 4 4 12 0 16" stroke="#99a" strokeWidth="2" fill="none" /></>,
  <><circle cx="16" cy="16" r="14" fill="#f7cf1d" /><path d="M16 4c9 0 12 6 12 12s-4 12-12 12a10 10 0 0 0 4-12c-2-4-5-4-4-12z" fill="#3a9b3b" /><path d="M16 10v12M10 16h12" stroke="#fff" strokeWidth="4" /></>,
  swirl,
  <path d="M4 30v-4M10 30v-8M16 30V17M22 30V11M28 30V4" stroke="#fff" strokeWidth="4" />,
]

function Grip() {
  return (
    <svg width="9" height="32" viewBox="0 0 9 32" className="shrink-0">
      <path d="M1 1v30M4.500 1v30M8 1v30" stroke="#0d3150" strokeWidth="1.500" strokeDasharray="1.500 2.500" />
    </svg>
  )
}

function Taskbar() {
  return (
    <div className="relative flex h-10 shrink-0 items-center border-t border-[#16324f] bg-linear-to-r from-[#24679b] from-0% via-[#3c97cf] via-30% to-[#123f6e] to-100%">
      {/* wallpaper light showing through the glass */}
      <svg className="pointer-events-none absolute inset-0 h-full w-full" viewBox="0 0 1920 40" preserveAspectRatio="none">
        <defs>
          <linearGradient id="glass" x1="0" x2="1" y1="0" y2="0">
            <stop offset="0" stopColor="#1f6296" /><stop offset=".04" stopColor="#2d79ad" /><stop offset=".045" stopColor="#4aa5d8" />
            <stop offset=".35" stopColor="#3792cc" /><stop offset=".53" stopColor="#2680c8" /><stop offset=".72" stopColor="#2069ad" />
            <stop offset=".79" stopColor="#1a4f88" /><stop offset="1" stopColor="#103a68" />
          </linearGradient>
          <filter id="soft" x="-20%" width="140%" y="-20%" height="140%"><feGaussianBlur stdDeviation="3" /></filter>
        </defs>
        <rect width="1920" height="40" fill="url(#glass)" />
        <path d="M568 14c200 20 400-10 560-12v12c-200 0-380 26-560 14z" fill="#5bb0e2" opacity=".25" filter="url(#soft)" />
        <path d="M680 40c60-6 120-24 160-40h30c-50 24-90 36-130 40z" fill="#7cc4ee" opacity=".25" filter="url(#soft)" />
        <path d="M1080 0h130l50 40h-110z" fill="#4b9bdc" opacity=".18" />
        <path d="M1300-4h26c30 12 46 28 56 48h-22c-12-20-30-36-60-48z" fill="#b9defa" opacity=".9" filter="url(#soft)" />
        <rect width="1920" height="2" fill="#fff" opacity=".25" />
      </svg>
      <div className="relative flex h-full w-full items-center">
        <button type="button" aria-label="开始" className="ml-2">
          <svg width="38" height="38" viewBox="0 0 38 38">
            <defs><radialGradient id="orb" cx=".5" cy="1" r=".9"><stop offset="0" stopColor="#3fe0ff" /><stop offset=".5" stopColor="#1a67a8" /><stop offset="1" stopColor="#6f9cc0" /></radialGradient></defs>
            <circle cx="19" cy="19" r="17.500" fill="url(#orb)" stroke="#153a5c" />
            <path d="M12 12c3-2 5-2 7-1l-2 8c-2-1-4-1-7 0z" fill="#f0562c" /><path d="M20 12c3 1 5 1 8 0l-2 8c-3 1-5 1-8 0z" fill="#8fd13f" />
            <path d="M10 20c3-1 5-1 7 0l-2 8c-2-1-4-1-7 0z" fill="#46b5f0" /><path d="M18 21c3 1 5 1 8 0l-2 8c-3 1-5 1-8 0z" fill="#fcd116" />
          </svg>
        </button>
        <span className="mr-[9px] ml-3"><Grip /></span>
        <div className="flex gap-1">
          {taskApps.map((app) => (
            <button
              key={app.name}
              type="button"
              aria-label={app.name}
              className={`flex h-[38px] w-[58px] items-center justify-center rounded-[3px] border shadow-[0_0_0_1px_#1c4e78] ${app.active ? 'border-white bg-linear-to-br from-[#e4f3fb] to-[#9ccbe8]' : 'border-[#9fd0ea] bg-linear-to-br from-[#9fd2ec] to-[#3f97c8]'}`}
            >
              <svg width="32" height="32" viewBox="0 0 33 33">{app.icon}</svg>
            </button>
          ))}
        </div>
        <div className="ml-auto flex items-center text-white">
          <Grip />
          <svg width="16" height="16" viewBox="0 0 16 16" className="ml-[9px]"><path d="M1 6h14v9H1z" fill="#d5dade" stroke="#666" /><path d="M3 8.500h10M3 10.500h10M5 12.500h6" stroke="#555" strokeDasharray="1.500 1" /><path d="M5 5c0-4 6 0 8-4" stroke="#ddd" fill="none" /></svg>
          <span className="ml-[6px] flex h-[15px] w-[15px] items-center justify-center rounded-full border border-[#c9cfe0] bg-[#1c2c9e] text-[11px] font-bold leading-none">?</span>
          <svg width="10" height="22" viewBox="0 0 10 22" fill="none" stroke="#fff" className="mr-[10px] ml-[9px]"><path d="M3.500 3V.5h5v4H6M1 3.500h5v4H1z" /><path d="M2 15h6l-3 4z" fill="#fff" stroke="none" /></svg>
          <div className="mr-1 flex items-center gap-2">
            {trayIcons.map((icon, i) => (
              <svg key={i} width="16" height="16" viewBox="0 0 32 32">{icon}</svg>
            ))}
            <Volume2 size={16} />
          </div>
          <div className="mx-[13px] w-[66px] text-center text-xs leading-[18px]">
            <div>14:20</div>
            <div>2025/3/12</div>
          </div>
          <svg width="16" height="14" viewBox="0 0 16 14" className="ml-1"><path d="M0 0h16v14H0z" fill="#fff" /><path d="M6 3v8l5-4z" fill="#111" /></svg>
          <span className="ml-3 h-[39px] w-[13px] border border-[#7f9ab8] bg-linear-to-b from-[#4c6f96] to-[#173c66]" />
        </div>
      </div>
    </div>
  )
}

/* ---------- page ---------- */

const pageTabs = [
  { name: '造价分析', w: 'w-20' },
  { name: '工程概况', w: 'w-20' },
  { name: '取费设置', w: 'w-20' },
  { name: '预算书', w: 'w-[68px]' },
  { name: '措施项目', w: 'w-20' },
  { name: '人材机汇总', w: 'w-[92px]' },
  { name: '费用汇总', w: 'w-20' },
]

function App() {
  const [tab, setTab] = useState('预算书')

  return (
    <div className="flex h-screen flex-col overflow-hidden bg-[#f5f5f5] font-['Noto_Sans','Noto_Sans_CJK_SC',sans-serif] text-xs text-[#222]">
      <header className="shrink-0 border-b border-[#d8d8d8] bg-linear-to-b from-white to-[#f4f4f4]">
        <TitleBar />
        <MenuRow />
      </header>

      <div className="flex h-[73px] shrink-0 items-start border-b border-[#ccc] bg-linear-to-b from-[#f4f4f4] to-[#dedede] pt-1">
        {ribbonItems.map((item) => (
          <RibbonButton key={item.lines[0]} item={item} />
        ))}
      </div>

      <div className="flex min-h-0 flex-1">
        <ProjectPanel />
        <div className="flex min-w-0 flex-1 flex-col">
          <div className="flex h-[27px] shrink-0 items-stretch border-b border-[#d8d8d8]">
            {pageTabs.map((t) => (
              <button
                key={t.name}
                type="button"
                onClick={() => setTab(t.name)}
                className={`border-r border-[#c4c4c4] ${t.w} ${tab === t.name ? 'bg-[#cce6ff] text-[#3f97ff]' : 'pt-[2px] text-black'}`}
              >
                {t.name}
              </button>
            ))}
            <div className="ml-auto flex items-center gap-2 pr-5">
              <BlockArrow dir="up" className="text-[#3f97ff]" />
              <BlockArrow dir="down" className="text-[#3f97ff]" />
              <BlockArrow dir="left" className="text-[#d4d4d4]" />
              <BlockArrow dir="right" className="text-[#d4d4d4]" />
              <button type="button" aria-label="列设置" className="ml-2 flex items-center gap-1">
                <svg width="15" height="16" viewBox="0 0 15 16"><path d="M1 1v14" stroke={BLUE} strokeWidth="2" /><path d="M5 1v4M8 1v3M11 1v3M14 1v4" stroke={BLUE} /><circle cx="9.500" cy="10.500" r="3" fill="none" stroke={ORANGE} strokeWidth="3" /></svg>
                <Caret size={5} className="text-[#999]" />
              </button>
            </div>
          </div>

          <div className="flex min-h-0 flex-1">
            <SectionPanel />
            <main className="relative flex min-w-0 flex-1 flex-col border-l border-[#e0e0e0]">
              <QuotaTable />
              <div className="flex h-[17px] shrink-0 items-center border-b-2 border-[#c0c0c0] bg-[#e8e8e8] pr-4">
                <span className="ml-auto"><Triangle dir="right" /></span>
              </div>
              <div className="h-[30px] shrink-0 border-b border-[#c0c0c0] bg-[#f5f5f5]" />
              <div className="flex h-[286px] shrink-0 bg-white">
                <QuantityPanel />
                <VariablePanel />
              </div>
              <SteelDialog />
            </main>
          </div>
        </div>
      </div>

      <StatusBar />
      <Taskbar />
    </div>
  )
}

export default App
